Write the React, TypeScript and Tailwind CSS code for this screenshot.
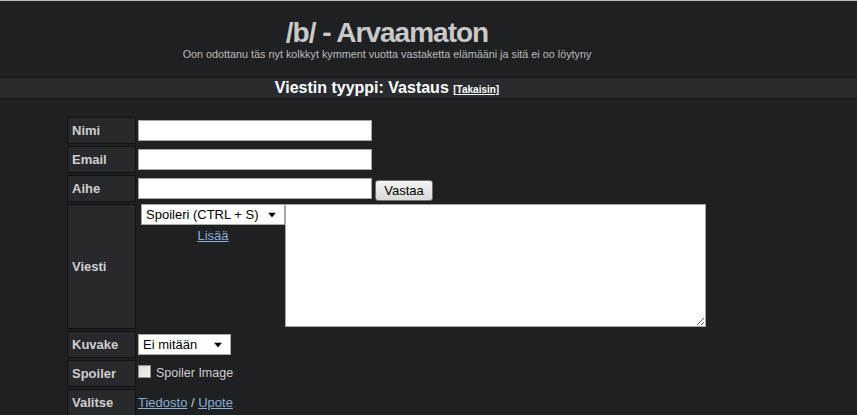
import React from "react";

function Caret() {
  return (
    <svg width="8" height="5" viewBox="0 0 8 5" className="absolute right-[8px] top-1/2 -translate-y-1/2 pointer-events-none">
      <path d="M0 0H8L4 5Z" fill="#000" />
    </svg>
  );
}

function Label({ children, tall }: { children: React.ReactNode; tall?: boolean }) {
  return (
    <div
      className={`w-[69px] ${tall ? "h-[125px]" : "h-[27px]"} shrink-0 bg-[#28292d] border border-[#111214] flex items-center pl-[4px] text-[13px] font-bold text-[#cfcfcf]`}
    >
      {children}
    </div>
  );
}

export default function App() {
  return (
    <div className="min-h-screen bg-[#1f2022] font-['Liberation_Sans',Arial,sans-serif] overflow-hidden">
      <div className="h-px bg-[#bdbdbd]" />
      <div className="pr-[83px] pt-[16px] text-center">
        <h1 className="text-[28px] leading-[31px] font-bold tracking-[-1px] text-[#c9c9c9]">/b/ - Arvaamaton</h1>
        <p className="text-[10.8px] leading-[13px] text-[#bdbdbd]">
          Oon odottanu täs nyt kolkkyt kymment vuotta vastaketta elämääni ja sitä ei oo löytyny
        </p>
      </div>
      <div className="mt-[16px] border-y border-[#111214] bg-[#2a2b2f] h-[22px]">
        <div className="pr-[83px] text-center leading-[20px]">
          <span className="text-[16px] font-bold text-white">Viestin tyyppi: Vastaus</span>{" "}
          <a href="#" className="text-[10px] font-bold text-white underline">[Takaisin]</a>
        </div>
      </div>

      <div className="ml-[67px] mt-[18px] flex flex-col gap-[2px]">
        <div className="flex gap-[2px] items-center">
          <Label>Nimi</Label>
          <input className="w-[234px] h-[21px] bg-white border border-[#a5a5a5] outline-none" />
        </div>
        <div className="flex gap-[2px] items-center">
          <Label>Email</Label>
          <input className="w-[234px] h-[21px] bg-white border border-[#a5a5a5] outline-none" />
        </div>
        <div className="flex gap-[2px] items-center">
          <Label>Aihe</Label>
          <input className="w-[234px] h-[21px] bg-white border border-[#a5a5a5] outline-none" />
          <button className="ml-[1px] mt-[3px] w-[58px] h-[21px] rounded-[3px] border border-[#707070] bg-gradient-to-b from-[#f4f4f4] to-[#d9d9d9] text-[13px] text-black leading-[19px]">
            Vastaa
          </button>
        </div>
        <div className="flex gap-[2px] items-start">
          <Label tall>Viesti</Label>
          <div className="ml-[3px] w-[144px] flex flex-col items-center">
            <div className="relative w-[144px] h-[21px] bg-white border border-[#a9a9a9] text-[13px] text-black leading-[19px] pl-[4px]">
              Spoileri (CTRL + S)
              <Caret />
            </div>
            <a href="#" className="mt-[3px] text-[13px] leading-[15px] text-[#88b0d6] underline">Lisää</a>
          </div>
          <textarea className="-ml-[2px] w-[421px] h-[123px] bg-white border border-[#a5a5a5] outline-none" />
        </div>
        <div className="flex gap-[2px] items-center">
          <Label>Kuvake</Label>
          <div className="relative w-[93px] h-[21px] bg-white border border-[#a9a9a9] text-[13px] text-black leading-[19px] pl-[4px]">
            Ei mitään
            <Caret />
          </div>
        </div>
        <div className="flex gap-[2px] items-center">
          <Label>Spoiler</Label>
          <div className="flex items-center text-[12.5px] text-[#cfcfcf]">
            <span className="w-[13px] h-[13px] border border-[#8e8f8f] bg-gradient-to-br from-[#dcdcdc] to-[#f4f4f4] -translate-y-[2px]" />
            <span className="ml-[5px]">Spoiler Image</span>
          </div>
        </div>
        <div className="flex gap-[2px] items-center">
          <Label>Valitse</Label>
          <div className="text-[13px] text-[#cfcfcf]">
            <a href="#" className="text-[#88b0d6] underline">Tiedosto</a> / <a href="#" className="text-[#88b0d6] underline">Upote</a>
          </div>
        </div>
      </div>
    </div>
  );
}
